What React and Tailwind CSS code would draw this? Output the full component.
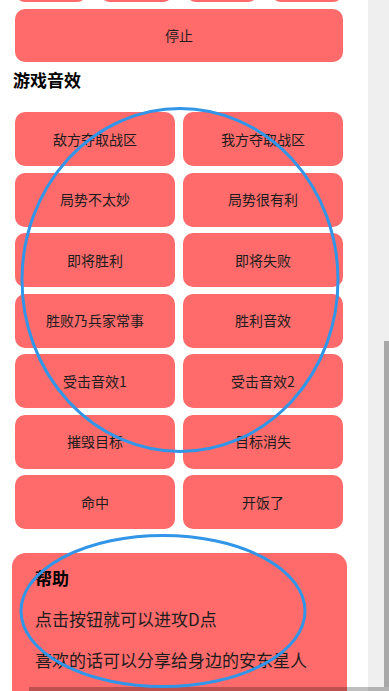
import React from "react";

const FONT = { fontFamily: '"Noto Sans CJK SC", "Noto Sans", sans-serif' };

const sounds = [
  "敌方夺取战区",
  "我方夺取战区",
  "局势不太妙",
  "局势很有利",
  "即将胜利",
  "即将失败",
  "胜败乃兵家常事",
  "胜利音效",
  "受击音效1",
  "受击音效2",
  "摧毁目标",
  "目标消失",
  "命中",
  "开饭了",
];

function Btn({ children, className = "" }) {
  return (
    <button
      className={
        "flex items-center justify-center rounded-[10px] bg-[#ff6b6b] text-[14px] text-[#1c1c1c] " +
        className
      }
    >
      {children}
    </button>
  );
}

export default function App() {
  return (
    <div className="relative flex h-[691px] w-[389px] overflow-hidden bg-white" style={FONT}>
      <div className="w-[368px] shrink-0 bg-white">
        <div className="mt-[-52px] ml-[15px] w-[328px]">
          <div className="grid grid-cols-4 gap-x-[13px]">
            <Btn className="h-[54px]"></Btn>
            <Btn className="h-[54px]"></Btn>
            <Btn className="h-[54px]"></Btn>
            <Btn className="h-[54px]"></Btn>
          </div>
          <Btn className="mt-[7px] h-[53px] w-full">停止</Btn>
        </div>
        <h2 className="ml-[13px] mt-[6px] h-[24px] text-[17px] font-bold leading-[24px] text-black">
          游戏音效
        </h2>
        <div className="ml-[15px] mt-[20px] grid w-[328px] grid-cols-2 gap-x-[8px] gap-y-[6.5px]">
          {sounds.map((s) => (
            <Btn key={s} className="h-[54px]">
              {s}
            </Btn>
          ))}
        </div>
        <div className="ml-[12px] mt-[24px] h-[200px] w-[335px] rounded-[14px] bg-[#ff6b6b] pl-[23px] pt-[13px]">
          <div className="flex flex-col gap-[17px] text-[17px] leading-[24px] text-[#1c1c1c]">
            <div className="font-bold text-black">帮助</div>
            <div>点击按钮就可以进攻D点</div>
            <div>喜欢的话可以分享给身边的安东星人</div>
          </div>
        </div>
      </div>
      <div className="flex-1 bg-[#efefef]"></div>

      {/* scrollbar thumbs */}
      <div className="absolute right-0 top-[341px] h-[346px] w-[5px] bg-[#a8a8a8]"></div>
      <div className="absolute bottom-0 left-[29px] right-0 h-[4px] bg-black/25"></div>

      {/* annotation ellipses */}
      <svg className="pointer-events-none absolute left-0 top-0" width="389" height="691">
        <ellipse cx="180" cy="280" rx="158" ry="171.5" fill="none" stroke="#3195e8" strokeWidth="3" />
        <ellipse cx="163" cy="611" rx="142" ry="75.5" fill="none" stroke="#3195e8" strokeWidth="3" />
      </svg>
    </div>
  );
}
